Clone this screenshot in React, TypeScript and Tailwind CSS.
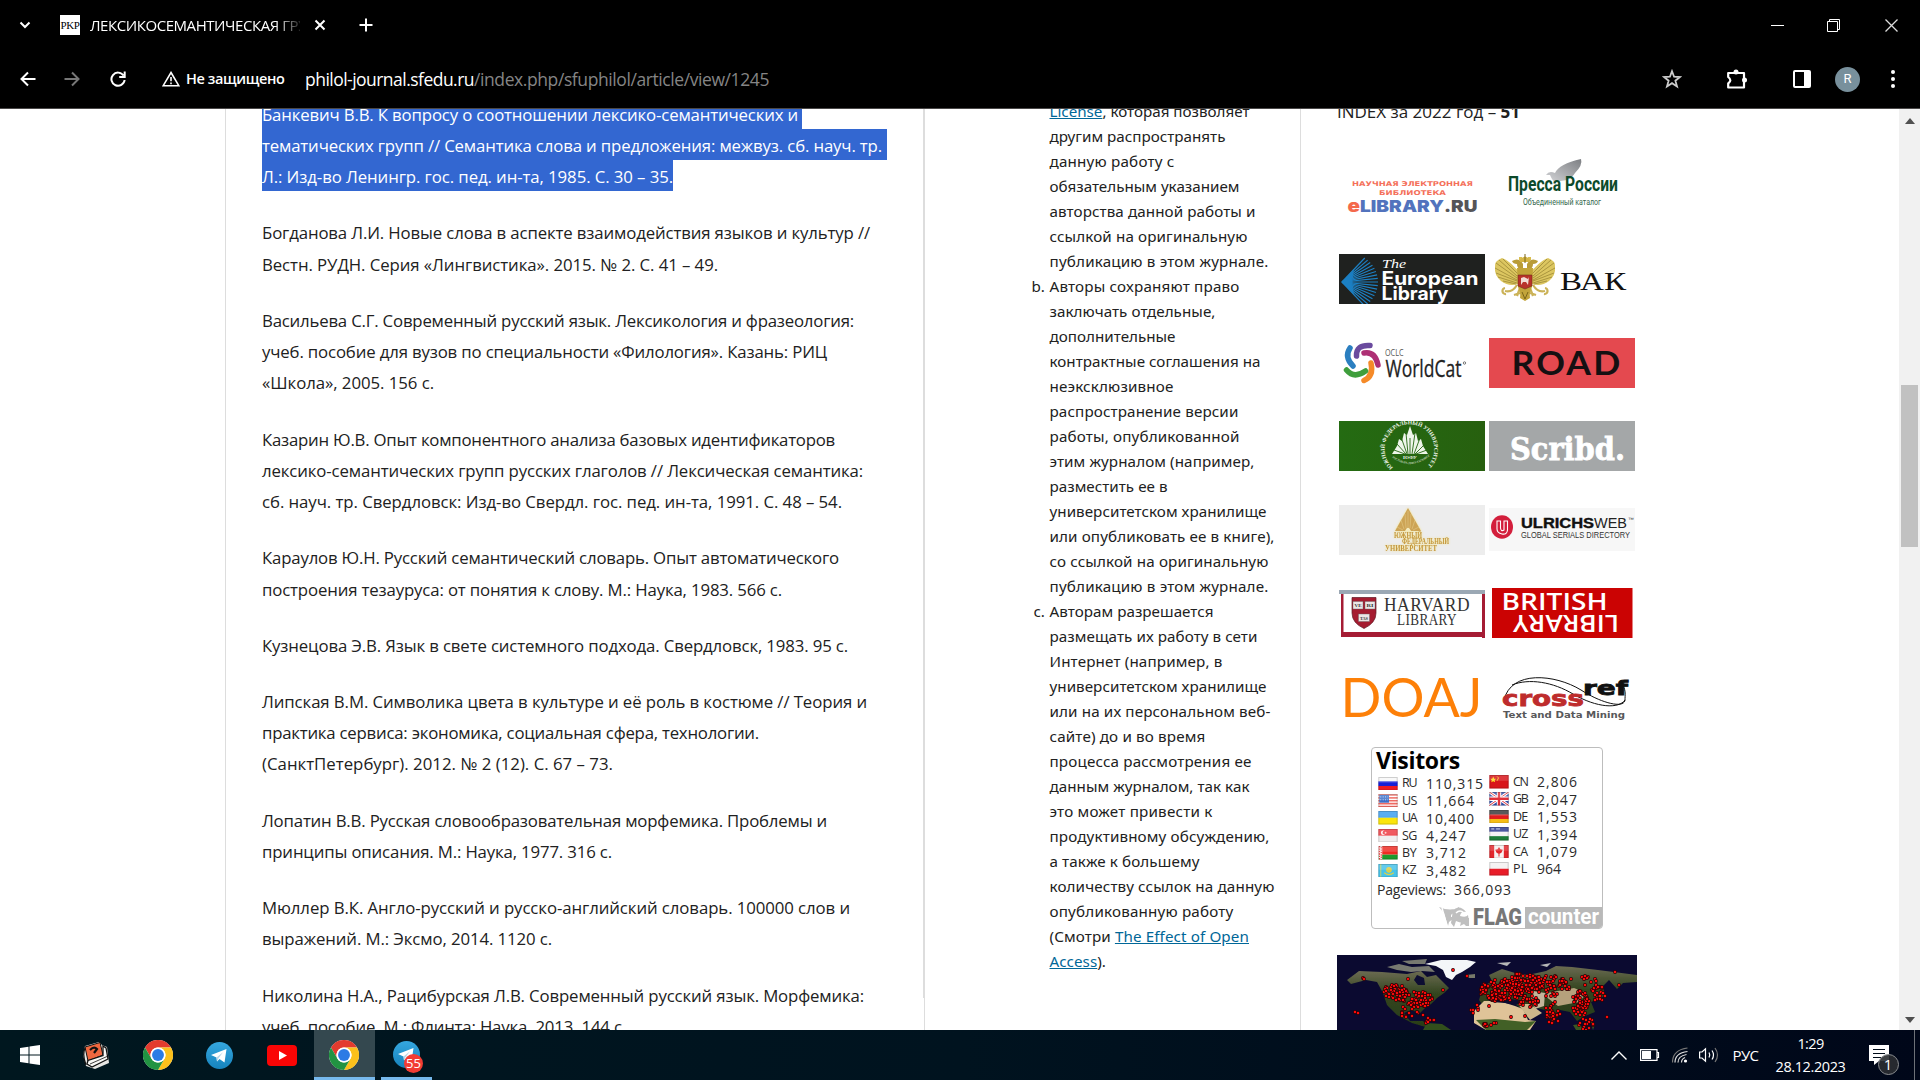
import { useLayoutEffect, useRef, type ReactNode } from "react";

/* Text run whose tracking is adjusted so that it spans exactly w pixels. */
function Fit({ w, children, className = "" }: { w: number; children: ReactNode; className?: string }) {
  const ref = useRef<HTMLSpanElement>(null);
  useLayoutEffect(() => {
    const el = ref.current;
    if (!el) return;
    el.style.letterSpacing = "0px";
    const natural = el.getBoundingClientRect().width;
    const n = (el.textContent || "").length;
    el.style.letterSpacing = `${(w - natural) / n}px`;
  }, [w, children]);
  return (
    <span ref={ref} className={`inline-block whitespace-nowrap ${className}`}>
      {children}
    </span>
  );
}

type Line = [string, number];

const references: Line[][] = [
  [["Богданова Л.И. Новые слова в аспекте взаимодействия языков и культур //", 608], ["Вестн. РУДН. Серия «Лингвистика». 2015. № 2. С. 41 – 49.", 456]],
  [["Васильева С.Г. Современный русский язык. Лексикология и фразеология:", 592], ["учеб. пособие для вузов по специальности «Филология». Казань: РИЦ", 565], ["«Школа», 2005. 156 с.", 172]],
  [["Казарин Ю.В. Опыт компонентного анализа базовых идентификаторов", 573], ["лексико-семантических групп русских глаголов // Лексическая семантика:", 601], ["сб. науч. тр. Свердловск: Изд-во Свердл. гос. пед. ин-та, 1991. С. 48 – 54.", 580]],
  [["Караулов Ю.Н. Русский семантический словарь. Опыт автоматического", 577], ["построения тезауруса: от понятия к слову. М.: Наука, 1983. 566 с.", 520]],
  [["Кузнецова Э.В. Язык в свете системного подхода. Свердловск, 1983. 95 с.", 586]],
  [["Липская В.М. Символика цвета в культуре и её роль в костюме // Теория и", 605], ["практика сервиса: экономика, социальная сфера, технологии.", 497], ["(СанктПетербург). 2012. № 2 (12). С. 67 – 73.", 351]],
  [["Лопатин В.В. Русская словообразовательная морфемика. Проблемы и", 565], ["принципы описания. М.: Наука, 1977. 316 с.", 350]],
  [["Мюллер В.К. Англо-русский и русско-английский словарь. 100000 слов и", 588], ["выражений. М.: Эксмо, 2014. 1120 с.", 290]],
  [["Николина Н.А., Рацибурская Л.В. Современный русский язык. Морфемика:", 602], ["учеб. пособие. М.: Флинта: Наука, 2013. 144 с.", 364]],
];

const selected: [string, number, number][] = [
  ["Банкевич В.В. К вопросу о соотношении лексико-семантических и", 536, 540],
  ["тематических групп // Семантика слова и предложения: межвуз. сб. науч. тр.", 620, 625],
  ["Л.: Изд-во Ленингр. гос. пед. ин-та, 1985. С. 30 – 35.", 411, 411],
];

const rightsB: Line[] = [
  ["Авторы сохраняют право", 190], ["заключать отдельные,", 166], ["дополнительные", 126], ["контрактные соглашения на", 211],
  ["неэксклюзивное", 124], ["распространение версии", 189], ["работы, опубликованной", 190], ["этим журналом (например,", 205],
  ["разместить ее в", 118], ["университетском хранилище", 217], ["или опубликовать ее в книге),", 225], ["со ссылкой на оригинальную", 219], ["публикацию в этом журнале.", 219],
];
const rightsC: Line[] = [
  ["Авторам разрешается", 164], ["размещать их работу в сети", 208], ["Интернет (например, в", 173], ["университетском хранилище", 217],
  ["или на их персональном веб-", 221], ["сайте) до и во время", 156], ["процесса рассмотрения ее", 202], ["данным журналом, так как", 200],
  ["это может привести к", 163], ["продуктивному обсуждению,", 220], ["а также к большему", 150], ["количеству ссылок на данную", 225], ["опубликованную работу", 184],
];
const rightsA: Line[] = [
  ["другим распространять", 176], ["данную работу с", 125], ["обязательным указанием", 190], ["авторства данной работы и", 206], ["ссылкой на оригинальную", 198], ["публикацию в этом журнале.", 219],
];

function Lines({ lines }: { lines: Line[] }) {
  return (
    <>
      {lines.map(([t, w], i) => (
        <div key={i} className="h-[25px]"><Fit w={w}>{t}</Fit></div>
      ))}
    </>
  );
}

/* Text stretched to a given length inside a logo drawing. */
function T({ x, y, w, s, f, c, b, i, ls, children }: { x: number; y: number; w: number; s: number; f: string; c: string; b?: number; i?: boolean; ls?: number; children: string }) {
  return (
    <text x={x} y={y} textLength={w} lengthAdjust="spacingAndGlyphs" fontSize={s} fontFamily={f} fill={c} fontWeight={b ?? 400} fontStyle={i ? "italic" : "normal"} letterSpacing={ls}>
      {children}
    </text>
  );
}

const logo = "block h-[50px] w-[146px] shrink-0 overflow-visible";
const clippedLogo = "block h-[50px] w-[146px] shrink-0 overflow-hidden";

function ELibrary() {
  return (
    <svg viewBox="0 0 146 50" className={logo}>
      <T x={13} y={15} w={121} s={6.6} f="DejaVu Sans" b={700} c="#f4705a">НАУЧНАЯ ЭЛЕКТРОННАЯ</T>
      <T x={40} y={24} w={67} s={6.6} f="DejaVu Sans" b={700} c="#f4705a">БИБЛИОТЕКА</T>
      <T x={8.5} y={41} w={12.5} s={17.5} f="Inter" b={900} c="#f4694c">e</T>
      <T x={21} y={41} w={84} s={16.5} f="Inter" b={900} c="#5273bd">LIBRARY</T>
      <T x={105} y={41} w={33.5} s={16.5} f="Inter" b={900} c="#555558">.RU</T>
    </svg>
  );
}
function Pressa() {
  return (
    <svg viewBox="0 0 146 50" className={logo}>
      <defs><linearGradient id="dove" x1="1" y1="0" x2="0" y2="1"><stop offset="0" stopColor="#7d7f83" /><stop offset="1" stopColor="#d4d5d8" /></linearGradient></defs>
      <path d="M57 4 Q60 -1 66 2 Q70 -7 92 -12 Q94 -6 86 2 Q83 7 78 9 L65 11 Q62 7 61 4Z" fill="url(#dove)" />
      <T x={19} y={20} w={110} s={20.5} f="Roboto" b={700} c="#0c4a2b">Пресса России</T>
      <T x={34} y={33.500} w={78} s={9.5} f="Roboto" c="#35684c">Объединенный каталог</T>
    </svg>
  );
}
function European() {
  return (
    <svg viewBox="0 0 146 50" className={clippedLogo}>
      <rect width="146" height="50" fill="#1f211f" />
      <path d="M3 28 L15 15 Q12 28 15 41Z" fill="#1673b5" />
      <g stroke="#1d80c4" strokeWidth="1.2">
        {Array.from({ length: 17 }, (_, k) => {
          const a = (-48 + k * 6) * (Math.PI / 180);
          const r = 30 + 6 * Math.cos(a);
          return <path key={k} d={`M3 28 L${3 + r * Math.cos(a)} ${28 + r * Math.sin(a) * 0.95}`} />;
        })}
      </g>
      <T x={43} y={14} w={24} s={12.5} f="Liberation Serif" i c="#fff">The</T>
      <T x={42.5} y={30.500} w={97} s={18.5} f="Inter" b={700} c="#fff">European</T>
      <T x={42.5} y={46} w={67} s={18.5} f="Inter" b={700} c="#fff">Library</T>
    </svg>
  );
}
function Vak() {
  const wing = (
    <g>
      <path d="M-5 17 C-11 12 -15 6 -23 3 Q-31 6 -30 12 Q-31 20 -24 26 Q-16 32 -7 29Z" fill="#dcc660" />
      <path d="M-7 19 L-22 4 M-8 21 L-26 5 M-8 23 L-29 8 M-8 25 L-30 13 M-8 26 L-29 18 M-8 28 L-27 22 M-9 29 L-22 26" stroke="#94802f" strokeWidth=".7" />
      <path d="M-2 14 Q-8 15 -8 9 Q-12 9 -13 6 Q-8 3 -4 6 L-2 9Z" fill="#b99c38" />
      <path d="M-6 5 V2 H-3 V5Z" fill="#d9bd4e" />
      <path d="M-8 30 Q-13 38 -20 36 M-20 33 A3 3 0 1 0 -19 39 M-5 33 L-8 41 M-11 40 L-5 38" stroke="#cbb257" strokeWidth="2.2" fill="none" />
    </g>
  );
  return (
    <svg viewBox="0 0 146 50" className={logo}>
      <g transform="translate(36 1)">
        {wing}
        <g transform="scale(-1 1)">{wing}</g>
        <path d="M-8 13 H8 L7 32 Q4 36 5 43 L0 46 L-5 43 Q-4 36 -7 32Z" fill="#c2a43a" />
        <path d="M-5 5 Q0 -2 5 5 V7 H-5Z" fill="#d4b545" />
        <path d="M0 -1 V8" stroke="#7b6518" />
        <path d="M-7 20 H7 V31 L0 34 L-7 31Z" fill="#b8322b" stroke="#74301a" strokeWidth=".6" />
        <path d="M-4 23 L-1 22 L3 24 L4 22 L3 30 L1 27 L-2 27 L-4 30Z" fill="#f2dcd6" />
        <path d="M-3 37 L0 44 L3 37" stroke="#7b6518" fill="none" />
      </g>
      <T x={71} y={36} w={66} s={26} f="Liberation Serif" c="#111">ВАК</T>
    </svg>
  );
}
function WorldCat() {
  return (
    <svg viewBox="0 0 146 50" className={logo}>
      <g fill="none" strokeWidth="5.5" strokeLinecap="round">
        <path d="M11 10 Q5 19 14 28" stroke="#2b7fc0" />
        <path d="M17.500 18 Q17 6.500 31 7.500" stroke="#6a4a9e" />
        <path d="M25 15 Q36 13 39 27" stroke="#ae2f74" />
        <path d="M32 25 Q35 38 25 42.500" stroke="#f58a28" />
        <path d="M7.500 32 Q15 41 26.500 33" stroke="#3f9e3c" />
      </g>
      <T x={46} y={18} w={18.5} s={9.5} f="Open Sans" c="#555">OCLC</T>
      <g stroke="#222" strokeWidth=".3"><T x={46.5} y={38.5} w={76} s={23.5} f="Open Sans" c="#222">WorldCat</T></g>
      <circle cx="125.5" cy="25" r="1.2" fill="none" stroke="#444" strokeWidth=".7" />
    </svg>
  );
}
function Road() {
  return (
    <svg viewBox="0 0 146 50" className={logo}>
      <rect width="146" height="50" fill="#e4494f" />
      <T x={22.500} y={37} w={111} s={32} f="Lato" b={700} c="#151012" ls={2}>ROAD</T>
    </svg>
  );
}
function SfeduGreen() {
  return (
    <svg viewBox="0 0 146 50" className={clippedLogo}>
      <defs>
        <linearGradient id="gr"><stop offset="0" stopColor="#246b12" /><stop offset="1" stopColor="#27600f" /></linearGradient>
        <path id="ring" d="M54 46.5 A24.800 24.800 0 1 1 87 46.5" />
        <path id="ringIn" d="M50 34 Q71 52 92 34" />
      </defs>
      <rect width="146" height="50" fill="url(#gr)" />
      <g fill="#eef5ea">
        <text fontSize="5.600" fontFamily="Liberation Serif" fontWeight="700"><textPath href="#ring">ЮЖНЫЙ ФЕДЕРАЛЬНЫЙ УНИВЕРСИТЕТ</textPath></text>
        <path d="M71 5 L74 14 L77 12 L79 20 L82 18 L84 25 L89 33 H53 L58 25 L60 18 L63 20 L65 12 L68 14Z" />
        <g stroke="#246512" strokeWidth=".9">
          <path d="M71 33 V17 M69 33 L67 12 M73 33 L76 12 M68 33 L62 16 M75 33 L81 17 M67 33 L58 23 M76 33 L85 24 M66 33 L55 29 M77 33 L88 29" />
        </g>
        <T x={64} y={38} w={14} s={4.600} f="Liberation Serif" b={700} c="#eef5ea">ЮФУ</T>
        <text fontSize="2.900" fontFamily="Liberation Serif"><textPath href="#ringIn" startOffset="4">РОСТОВ-НА-ДОНУ-ТАГАНРОГ</textPath></text>
      </g>
    </svg>
  );
}
function Scribd() {
  return (
    <svg viewBox="0 0 146 50" className={logo}>
      <rect width="146" height="50" fill="#a4a7a8" />
      <g stroke="#fff" strokeWidth=".8"><T x={21} y={39} w={115} s={31} f="DejaVu Serif" b={700} c="#fff">Scribd.</T></g>
    </svg>
  );
}
function SfeduGold() {
  return (
    <svg viewBox="0 0 146 50" className={logo}>
      <rect width="146" height="50" fill="#ededed" />
      <g style={{ filter: "drop-shadow(0 0 1px #f5e58a)" }}>
        <path d="M69 3 L82 26 H56Z" fill="#cda455" />
        <path d="M69 22 V6 M67 23 L66 9 M71 23 L72 9 M65 24 L62 15 M73 24 L76 15 M64 25 L58 22 M74 25 L80 22" stroke="#eddca0" strokeWidth=".4" />
        <path d="M66 26 Q69 19 72 26Z" fill="#f5ecc0" />
        <T x={55} y={33} w={28} s={7.5} f="Liberation Serif" b={700} c="#c4973e">ЮЖНЫЙ</T>
        <T x={63} y={39} w={47} s={7.5} f="Liberation Serif" b={700} c="#c4973e">ФЕДЕРАЛЬНЫЙ</T>
        <T x={46} y={46} w={52} s={7.5} f="Liberation Serif" b={700} c="#c4973e">УНИВЕРСИТЕТ</T>
      </g>
    </svg>
  );
}
function Ulrichs() {
  return (
    <svg viewBox="0 0 146 50" className={logo}>
      <rect y="3" width="146" height="43" fill="#f7f7f7" />
      <ellipse cx="13" cy="22" rx="11" ry="11.8" fill="#d31f3c" />
      <path d="M8 16 H11.5 V23 Q12 27 15 25 V16 H18.5 V25 Q18 30 13 29 Q8 28 8 24Z" fill="none" stroke="#fff" strokeWidth="1.1" />
      <g stroke="#111" strokeWidth=".4"><T x={32} y={23} w={73} s={14.8} f="Liberation Sans" b={700} c="#111">ULRICHS</T></g>
      <T x={105} y={23} w={33} s={14.8} f="Liberation Sans" c="#222">WEB</T>
      <T x={139} y={16} w={6} s={5} f="Liberation Sans" c="#333">™</T>
      <T x={32} y={33} w={109} s={8.5} f="Liberation Sans" c="#333">GLOBAL SERIALS DIRECTORY</T>
    </svg>
  );
}
function Harvard() {
  return (
    <svg viewBox="0 0 146 50" className={logo}>
      <path d="M2 6 V49 H143 V50 H146 V6Z" fill="#a51c34" />
      <path d="M4.500 6 H143 V44 H4.500Z" fill="#fff" />
      <rect y="2" width="146" height="4" fill="#9ba8b4" />
      <path d="M13 9.500 H37 V25 Q37 35 25 40.500 Q13 35 13 25Z" fill="#a51c30" stroke="#5b1722" strokeWidth=".7" />
      <g fill="#ece6e6" stroke="#666" strokeWidth=".4">
        <rect x="14" y="13.500" width="10" height="7.500" /><rect x="26" y="13.500" width="10" height="7.500" /><rect x="19.500" y="26" width="11" height="7.500" />
      </g>
      <T x={15.500} y={19} w={7} s={5} f="Liberation Serif" b={700} c="#333">VE</T>
      <T x={27.500} y={19} w={7} s={5} f="Liberation Serif" b={700} c="#333">RI</T>
      <T x={21} y={31.500} w={8} s={5} f="Liberation Serif" b={700} c="#333">TAS</T>
      <T x={45} y={22.500} w={86} s={18} f="Liberation Serif" c="#333" ls={0.5}>HARVARD</T>
      <T x={58} y={37} w={60} s={16} f="Liberation Serif" c="#333" ls={0.5}>LIBRARY</T>
    </svg>
  );
}
function British() {
  return (
    <svg viewBox="0 0 146 50" className={logo}>
      <rect x="3" width="140.500" height="50" fill="#cb0303" />
      <T x={12.500} y={22} w={106} s={24} f="Open Sans" b={600} c="#fff">BRITISH</T>
      <g transform="rotate(180 79 35)"><T x={28} y={43} w={106} s={24} f="Open Sans" b={600} c="#fff">LIBRARY</T></g>
    </svg>
  );
}
function Doaj() {
  return (
    <svg viewBox="0 0 146 50" className={logo}>
      <T x={1.500} y={45} w={142} s={54} f="Lato" c="#fd8008">DOAJ</T>
    </svg>
  );
}
function Crossref() {
  return (
    <svg viewBox="0 0 146 50" className={logo}>
      <path d="M15 28 C22 -2 66 2 92 18 C112 31 135 37 136 28 C136 24 137 18 134 14 M23 13 C40 6 64 10 84 22 C108 36 130 37 136 28" fill="none" stroke="#111" strokeWidth="1" />
      <g stroke="#be2c2c" strokeWidth=".8"><T x={13} y={34} w={82} s={21.500} f="DejaVu Sans" b={700} c="#be2c2c">cross</T></g>
      <g stroke="#111" strokeWidth=".8"><T x={94} y={22.500} w={45} s={19.500} f="DejaVu Sans" b={700} c="#111">ref</T></g>
      <T x={14} y={45.500} w={122} s={9.500} f="DejaVu Sans" b={700} c="#58585a">Text and Data Mining</T>
    </svg>
  );
}

const flagArt: Record<string, ReactNode> = {
  RU: <><rect width="20" height="14" fill="#f8f8f8" /><rect y="4.500" width="20" height="5" fill="#1620d8" /><rect y="9.300" width="20" height="4.700" fill="#ee1c22" /></>,
  US: <><rect width="20" height="14" fill="#fff" /><path d="M0 1H20M0 4H20M0 7H20M0 10H20M0 13H20" stroke="#ef6a62" strokeWidth="1.600" /><rect x="1" y="1" width="10" height="8" fill="#3c6fc8" /><path d="M2 3H10M2 6H10" stroke="#cfe0ff" strokeDasharray="1 1.500" /></>,
  UA: <><rect width="20" height="7" fill="#3b9ff0" /><rect y="7" width="20" height="7" fill="#fbe50c" /></>,
  SG: <><rect width="20" height="7" fill="#ee3b42" /><rect y="7" width="20" height="7" fill="#f1eeee" /><circle cx="5" cy="3.800" r="2.300" fill="#fff" /><circle cx="6.200" cy="3.800" r="1.900" fill="#ee3b42" /><circle cx="7.500" cy="3.800" r="1" fill="#fcc" /></>,
  BY: <><rect width="20" height="9" fill="#ee2a22" /><rect y="9" width="20" height="5" fill="#1c9a2c" /><rect width="4" height="14" fill="#fff" /><path d="M1.200 0V14M3 1V14" stroke="#ee3a3a" strokeWidth="1.200" strokeDasharray="1.500 1" /></>,
  KZ: <><rect width="20" height="14" fill="#45c3ea" /><path d="M2.500 0V14" stroke="#cbd56a" /><circle cx="11" cy="6" r="3" fill="#d9d04a" /><path d="M6 9Q11 13 16 9" stroke="#d9d04a" fill="none" strokeWidth="1.300" /></>,
  CN: <><rect width="20" height="14" fill="#d8141a" /><path d="M4 1.500 L5 4 L7 4 L5.500 5.500 L6 7.500 L4 6.500 L2 7.500 L2.500 5.500 L1 4 L3 4Z" fill="#fcdc1c" /><path d="M8 1.500 L9.500 3 L8 6" stroke="#fcc81c" fill="none" /></>,
  GB: <><rect width="20" height="14" fill="#3450a8" /><path d="M0 0L20 14M20 0L0 14" stroke="#fff" strokeWidth="3" /><path d="M0 0L20 14M20 0L0 14" stroke="#e0303a" strokeWidth="1" /><path d="M10 0V14M0 7H20" stroke="#fff" strokeWidth="4.500" /><path d="M10 0V14M0 7H20" stroke="#e0303a" strokeWidth="2.500" /></>,
  DE: <><rect width="20" height="5" fill="#3a3a3a" /><rect y="4.700" width="20" height="4.700" fill="#e21d1d" /><rect y="9.300" width="20" height="4.700" fill="#f6bd16" /></>,
  UZ: <><rect width="20" height="5" fill="#2b3890" /><rect y="5" width="20" height="4.500" fill="#f5f2f4" /><rect y="9.500" width="20" height="4.500" fill="#1f7d3a" /><path d="M2 2H5M7 2H11" stroke="#cdd3f3" /></>,
  CA: <><rect width="20" height="14" fill="#f7f0f0" /><rect width="5" height="14" fill="#e2262c" /><rect x="15" width="5" height="14" fill="#e2262c" /><path d="M10 2L11.500 4.500L14 5L12.500 8L10.500 9V12H9.500V9L7.500 8L6 5L8.500 4.500Z" fill="#e2262c" /></>,
  PL: <><rect width="20" height="7" fill="#f4f1f1" /><rect y="7" width="20" height="7" fill="#e81c28" /></>,
};

const visitors: [string, string][][] = [
  [["RU", "110,315"], ["US", "11,664"], ["UA", "10,400"], ["SG", "4,247"], ["BY", "3,712"], ["KZ", "3,482"]],
  [["CN", "2,806"], ["GB", "2,047"], ["DE", "1,553"], ["UZ", "1,394"], ["CA", "1,079"], ["PL", "964"]],
];
const numberWidth: Record<string, number> = { "110,315": 58, "11,664": 49, "10,400": 49, "964": 24 };

function VisitorColumn({ rows }: { rows: [string, string][] }) {
  return (
    <div className="flex w-[111px] flex-col">
      {rows.map(([c, n]) => (
        <div key={c} className="flex h-[17.400px] items-center">
          <svg viewBox="0 0 20 14" className="h-[13.500px] w-5 shrink-0">
            {flagArt[c]}
            <rect width="20" height="6" fill="#fff" opacity=".16" />
            <rect x=".5" y=".5" width="19" height="13" fill="none" stroke="#000" opacity=".18" />
          </svg>
          <span className="ml-1 w-6 pt-px text-[12.500px]"><Fit w={14.5}>{c}</Fit></span>
          <span className="text-[14px]"><Fit w={numberWidth[n] ?? 41}>{n}</Fit></span>
        </div>
      ))}
    </div>
  );
}

function FlagCounter() {
  return (
    <div className="mt-[25px] ml-[34px] flex h-[182px] w-[232px] flex-col overflow-hidden rounded-[4px] border border-[#bdbdbd] bg-white font-['Open_Sans',sans-serif] text-[#2b2b2b]">
      <div className="h-[27.500px] pl-1 text-[23px] leading-[24px] font-bold text-black"><Fit w={84}>Visitors</Fit></div>
      <div className="flex pl-1.5">
        <div className="pt-[.5px]"><VisitorColumn rows={visitors[0]} /></div>
        <div className="-mt-px"><VisitorColumn rows={visitors[1]} /></div>
      </div>
      <div className="h-[20px] pt-[1.500px] pl-[5px] text-[14px] leading-[18px]"><Fit w={69}>Pageviews:</Fit><span className="ml-2"><Fit w={58}>366,093</Fit></span></div>
      <svg viewBox="0 0 230 24" className="mt-[5px] block h-6 w-[230px] shrink-0">
        <path d="M67 3 Q79 8 87 3 L85 8 Q78 9 79 13 H83 L77 18 L76 22 L72 9Z M81 6 Q88 0 94 8 Q89 7 88 12 Q94 14 96 11 L97 18 Q89 20 84 17 L82 23 L79 19Z M90 14 H97 V22 H94 L92 20 L88 22Z" fill="#bfbfbf" />
        <path d="M70 4 L75 22 M84 9 Q88 5 92 9" stroke="#fff" fill="none" strokeWidth="1.500" />
        <rect x="153" y="3" width="77" height="21" fill="#b9b9b9" />
        <T x={101} y={20.500} w={49} s={23} f="Roboto" b={900} c="#777">FLAG</T>
        <T x={156} y={20} w={71} s={22} f="Roboto" b={700} c="#fff">counter</T>
      </svg>
    </div>
  );
}

/* Visitor dots: [centre x, centre y, spread x, spread y, count]. */
const clusters: [number, number, number, number, number][] = [
  [58, 38, 13, 8, 50], [80, 44, 15, 8, 55], [72, 57, 10, 6, 14], [88, 66, 10, 7, 10], [165, 35, 22, 12, 150], [187, 28, 20, 10, 110],
  [215, 31, 18, 11, 50], [192, 46, 10, 7, 28], [216, 58, 8, 11, 32], [243, 48, 9, 13, 60], [262, 38, 8, 9, 26], [249, 68, 8, 7, 16], [240, 25, 34, 6, 20], [139, 53, 5, 6, 6], [152, 69, 8, 3, 9],
];
const dots = (() => {
  let seed = 41;
  const rnd = () => ((seed = (seed * 16807) % 2147483647) / 2147483647);
  const out: [number, number][] = [[26, 23], [27, 24], [18, 57], [21, 58], [116, 15], [130, 21], [270, 62], [278, 17], [282, 30], [152, 51], [174, 62], [188, 61], [71, 24], [106, 35]];
  for (const [cx, cy, sx, sy, n] of clusters)
    for (let k = 0; k < n; k++) {
      const a = rnd() * Math.PI * 2;
      const r = Math.sqrt(rnd());
      out.push([Math.round(cx + Math.cos(a) * r * sx), Math.round(cy + Math.sin(a) * r * sy)]);
    }
  return out;
})();

function WorldMap() {
  return (
    <svg viewBox="0 0 300 75" className="mt-[26px] block h-[75px] w-[300px] shrink-0">
      <defs>
        <filter id="soft"><feGaussianBlur stdDeviation=".7" /></filter>
        <linearGradient id="forest" x2="0" y2="1"><stop offset="0" stopColor="#6c6b52" /><stop offset=".4" stopColor="#33451f" /><stop offset="1" stopColor="#283d18" /></linearGradient>
      </defs>
      <rect width="300" height="75" fill="#0b0a30" />
      <g filter="url(#soft)">
        <path d="M10 25 L22 16 L45 17 L70 19 L84 16 L90 22 L99 20 L112 33 L107 38 L100 43 L94 49 L88 53 L83 58 L74 55 L67 58 L73 66 L86 66 L92 73 L75 68 L60 60 L50 50 L46 38 L40 27 L29 25 L14 29Z" fill="url(#forest)" />
        <path d="M80 20 L87 23 L88 30 L81 30 L77 25Z" fill="#0b0a30" />
        <path d="M90 68 L105 69 L114 75 H86Z" fill="#33501e" />
        <path d="M50 12 L62 9 L75 12 L92 11 L98 17 L85 16 L74 17 L60 15Z M65 6 L90 4 L88 9 L72 9Z" fill="#77796f" />
        <path d="M88 9 L104 5 L130 5 L139 7 L133 12 L125 17 L119 20 L115 25 L109 22 L106 15 L99 11Z" fill="#f4f6f8" />
        <path d="M129 20 L138 19 L138 23 L132 23Z" fill="#77796a" />
        <path d="M142 45 L146 32 L155 26 L152 20 L165 14 L178 18 L191 20 L209 16 L219 11 L235 12 L261 15 L300 20 V27 L286 28 L280 34 L272 25 L266 31 L268 41 L254 47 L258 57 L248 61 L240 66 L233 57 L223 55 L216 69 L208 55 L195 52 L199 58 L190 63 L181 51 L170 46 L157 43 L145 49Z" fill="url(#forest)" />
        <path d="M205 39 L237 33 L250 38 L242 47 L221 51 L212 44Z" fill="#b6a17b" />
        <path d="M196 36 L208 38 L207 51 L198 54 L194 43Z" fill="#c2b59a" />
        <path d="M137 56 L147 46 L162 46 L178 51 L186 54 L191 65 L199 66 L193 75 H149 L137 68Z" fill="#dfc398" />
        <path d="M139 65 L158 64 L188 67 L199 66 L190 75 H149Z" fill="#426025" />
        <path d="M181 49 L193 49 L205 58 L193 65Z" fill="#cdb68b" />
        <path d="M160 8 L174 7 L170 11Z M203 10 L214 8 L210 12Z" fill="#b7b8b7" />
        <path d="M236 70 L243 69 L246 75 H239Z M253 65 L258 69 L256 75Z" fill="#3b5722" />
      </g>
      <path d="M149 43 L155 47 L168 48 L179 50 L186 46 L174 44 L165 45 L157 41Z M178 38 L190 39 L187 42 L179 42Z" fill="#0b0a30" />
      {dots.map(([x, y], i) => (
        <g key={i}><circle cx={x} cy={y} r="1.900" fill="#230205" /><circle cx={x} cy={y} r="1.250" fill="#fa0a0a" /></g>
      ))}
    </svg>
  );
}

function Chrome() {
  return (
    <svg viewBox="0 0 48 48" className="size-[30px]">
      <circle cx="24" cy="24" r="24" fill="#fff" />
      <path d="M3.200 12 A24 24 0 0 1 44.800 12 H24 A12 12 0 0 0 13.600 30Z" fill="#e33b2e" />
      <path d="M44.800 12 A24 24 0 0 1 24 48 L34.400 30 A12 12 0 0 0 24 12Z" fill="#fcc01b" />
      <path d="M24 48 A24 24 0 0 1 3.200 12 L13.600 30 A12 12 0 0 0 34.400 30Z" fill="#229342" />
      <circle cx="24" cy="24" r="12" fill="#fff" /><circle cx="24" cy="24" r="9.500" fill="#2c7be5" />
    </svg>
  );
}
function Telegram() {
  return (
    <svg viewBox="0 0 27 27" className="size-[27px]">
      <defs><linearGradient id="tg" x2="0" y2="1"><stop offset="0" stopColor="#35a7df" /><stop offset="1" stopColor="#1683bd" /></linearGradient></defs>
      <circle cx="13.500" cy="13.500" r="13.500" fill="url(#tg)" />
      <path d="M5 13 L20.500 7 L18.500 20.500 L13.500 17 L11 19.500 L10.500 15.500Z" fill="#fff" />
      <path d="M10.500 15.500 L17 10.200 L12.500 16.200 L11 19.500Z" fill="#b9d5e7" />
    </svg>
  );
}

const strokeIcon = { fill: "none", stroke: "#fff", strokeWidth: 2 } as const;

function Browser() {
  return (
    <header className="flex h-[109px] shrink-0 flex-col border-b border-[#4a4848] bg-black font-['Open_Sans',sans-serif] text-white">
      <div className="flex h-[50px] items-center">
        <svg viewBox="0 0 12 12" className="ml-[19px] size-3" {...strokeIcon}><path d="M1.500 3.500 L6 8 L10.500 3.500" /></svg>
        <div className="ml-[29px] flex h-5 w-5 items-center justify-center bg-white font-['Liberation_Serif',serif] text-[11px] text-black"><Fit w={19}>PKP</Fit></div>
        <div className="ml-[10px] w-[210px] overflow-hidden text-[15px] [mask-image:linear-gradient(to_right,#000_88%,transparent_102%)]"><Fit w={217}>ЛЕКСИКОСЕМАНТИЧЕСКАЯ ГРУ</Fit></div>
        <svg viewBox="0 0 12 12" className="ml-[14px] size-3" {...strokeIcon}><path d="M1.500 1.500 L10.500 10.500 M10.500 1.500 L1.500 10.500" /></svg>
        <svg viewBox="0 0 14 14" className="ml-[32.500px] size-3.5" {...strokeIcon}><path d="M7 0.500 V13.500 M0.500 7 H13.500" /></svg>
        <div className="ml-auto flex items-center gap-[43px] pr-[22px]">
          <svg viewBox="0 0 13 13" className="size-[13px]" fill="none" stroke="#fff"><path d="M0 6.500 H13" /></svg>
          <svg viewBox="0 0 13 13" className="size-[13px]" fill="none" stroke="#fff"><path d="M.5 2.500 H10.500 V12.500 H.5Z M2.500 2.500 V.5 H12.500 V10.500 H10.500" /></svg>
          <svg viewBox="0 0 13 13" className="ml-0.5 size-[13px]" fill="none" stroke="#ddd" strokeWidth="1.300"><path d="M.5 .5 L12.500 12.500 M12.500 .5 L.5 12.500" /></svg>
        </div>
      </div>
      <div className="flex h-[58px] items-center">
        <svg viewBox="0 0 16 16" className="ml-[20px] size-4" {...strokeIcon}><path d="M15.500 8 H1.500 M8 1.500 L1.500 8 L8 14.500" /></svg>
        <svg viewBox="0 0 16 16" className="ml-[28px] size-4" fill="none" stroke="#777" strokeWidth="2"><path d="M.5 8 H14.500 M8 1.500 L14.500 8 L8 14.500" /></svg>
        <svg viewBox="0 0 16 16" className="ml-[29.500px] size-4" {...strokeIcon}><path d="M13.500 4.500 A6.600 6.600 0 1 0 14.600 9 M14.700 0.500 V6 H9.200" /></svg>
        <svg viewBox="0 0 18 16" className="ml-[36.500px] h-4 w-[18px]" fill="none" stroke="#fff" strokeWidth="1.600"><path d="M9 1.500 L16.800 14.700 H1.200Z M9 6 V10.300 M9 11.500 V13.200" /></svg>
        <span className="ml-[6px] text-[14.500px] font-semibold"><Fit w={98.5}>Не защищено</Fit></span>
        <span className="ml-[20.500px] pt-px text-[17.500px]"><Fit w={169}>philol-journal.sfedu.ru</Fit></span>
        <span className="pt-px text-[17.500px] text-[#858585]"><Fit w={295}>/index.php/sfuphilol/article/view/1245</Fit></span>
        <div className="ml-auto flex items-center">
          <svg viewBox="0 0 20 20" className="size-5" fill="none" stroke="#ccc" strokeWidth="1.800"><path d="M10 2.200 L12.100 7.700 L18 8 L13.400 11.700 L15 17.500 L10 14.200 L5 17.500 L6.600 11.700 L2 8 L7.900 7.700Z" /></svg>
          <svg viewBox="0 0 21 21" className="ml-[43.500px] size-[21px]"><path d="M2.200 4 H18 V18.500 H2.200 V14.500 Q6.500 11.300 2.200 8Z" fill="none" stroke="#fff" strokeWidth="2.200" strokeLinejoin="round" /><circle cx="10" cy="3" r="2.500" fill="#fff" /><circle cx="18.500" cy="11" r="2.500" fill="#fff" /></svg>
          <svg viewBox="0 0 18 18" className="ml-[46.500px] size-[18px]"><rect x="1" y="1" width="16" height="16" rx="1" fill="none" stroke="#fff" strokeWidth="2" /><path d="M11 1 H17 V17 H11Z" fill="#fff" /></svg>
          <div className="ml-[24px] flex size-[25px] items-center justify-center rounded-full bg-[#78909c] font-[Roboto,sans-serif] text-[13px]">R</div>
          <svg viewBox="0 0 4 18" className="mr-[25.500px] ml-[30.500px] h-[18px] w-1" fill="#fff"><circle cx="2" cy="2" r="2" /><circle cx="2" cy="9" r="2" /><circle cx="2" cy="16" r="2" /></svg>
        </div>
      </div>
    </header>
  );
}

function Taskbar() {
  return (
    <footer className="flex h-[50px] shrink-0 items-center bg-linear-to-r from-[#00171f] via-[#00131f] to-[#000719] font-['Open_Sans',sans-serif] text-white">
      <svg viewBox="0 0 20 20" className="ml-5 size-5" fill="#fff"><path d="M0 3 L8.500 1.800 V9.500 H0Z M9.500 1.600 L20 0 V9.500 H9.500Z M0 10.500 H8.500 V18.200 L0 17Z M9.500 10.500 H20 V20 L9.500 18.400Z" /></svg>
      <svg viewBox="0 0 28 28" className="ml-[42px] size-7">
        <path d="M3 5 L17 1 L20 4 L25 6 L27 22 L13 28 L4 25 L1 14Z" fill="#e6e6e3" />
        <path d="M3 6 L18 1.500 L21 14 L6 20Z" fill="#f0683f" stroke="#111" strokeWidth="1" />
        <path d="M21 5 L24 7 L26 18 L10 26 L5 23 L6 19.500 L21 14.500Z" fill="#f8f8f5" stroke="#111" strokeWidth="1.300" />
        <path d="M8 23 L25 15.500" stroke="#111" strokeWidth=".8" />
        <path d="M8 9 Q12 5 15 8 L12 12" stroke="#111" strokeWidth="2.200" fill="none" />
        <path d="M3 7 Q0 14 4 24" stroke="#111" strokeWidth="1.300" fill="none" />
      </svg>
      <div className="ml-[33px]"><Chrome /></div>
      <div className="ml-[33px]"><Telegram /></div>
      <svg viewBox="0 0 30 21" className="ml-[34px] h-[21px] w-[30px]"><rect width="30" height="21" rx="4" fill="#fa0505" /><path d="M12 6 L20 10.500 L12 15Z" fill="#fff" /></svg>
      <div className="ml-[17px] flex h-[50px] w-[61px] items-center justify-center border-b-3 border-[#76b9ed] bg-[#34484f] pt-[3px] pr-px"><Chrome /></div>
      <div className="relative ml-[6px] flex h-[50px] w-[51px] items-center justify-center border-b-3 border-[#76b9ed] pt-[2px] pr-px">
        <Telegram />
        <span className="absolute top-[24px] left-[23px] flex size-[19px] items-center justify-center rounded-full bg-[#f23c34] text-[13px] leading-none">55</span>
      </div>
      <div className="ml-auto flex h-[50px] items-center">
        <svg viewBox="0 0 16 9" className="h-[9px] w-4" fill="none" stroke="#fff" strokeWidth="1.400"><path d="M.5 8.500 L8 1 L15.500 8.500" /></svg>
        <svg viewBox="0 0 20 12" className="ml-[13px] h-3 w-5"><path d="M.6 .6 H17 V11.400 H.6Z M17 3.500 H18.500 V8.500 H17" fill="none" stroke="#fff" strokeWidth="1.200" /><rect x="2" y="2" width="9" height="8" fill="#fff" /></svg>
        <svg viewBox="0 0 16 16" className="ml-[12px] size-4" fill="none" stroke="#ddd" strokeWidth="1.200"><path d="M9.500 15.500 Q9.500 12 13 10.500 M6 15.500 Q6 9 14.500 7.500 M3 15.500 Q3 6 15.500 4.500" /><path d="M.5 15.500 Q.5 3 15.500 1" stroke="#777" /><circle cx="13.500" cy="14" r="1.600" fill="#fff" stroke="none" /></svg>
        <svg viewBox="0 0 20 18" className="ml-[11px] h-[18px] w-5" fill="none" stroke="#fff" strokeWidth="1.200"><path d="M.6 6 H3 L6.500 2.800 V15.200 L3 12 H.6Z M10 6.500 Q11.500 9 10 11.500 M13 4.500 Q16 9 13 13.500" /><path d="M16 2 Q21 9 16 16" stroke="#777" /></svg>
        <span className="ml-[14px] text-[15px]"><Fit w={26}>РУС</Fit></span>
        <div className="ml-[17px] flex w-[70px] flex-col items-center text-[14.500px] leading-[23px]"><Fit w={26}>1:29</Fit><Fit w={70}>28.12.2023</Fit></div>
        <div className="relative mr-[25.500px] ml-[23px] h-[50px] w-5">
          <svg viewBox="0 0 20 21" className="mt-[15px] h-[21px] w-5"><path d="M0 0 H20 V16 H10 L5 20 V16 H0Z" fill="#fff" /><path d="M4 4.500 H16 M4 8.500 H16 M4 12.500 H12" stroke="#000b18" strokeWidth="1.200" /></svg>
          <span className="absolute top-[24px] left-[9px] flex size-[21px] items-center justify-center rounded-full border border-[#8a8d90] bg-[#2a2d32]/90 text-[15px] leading-none">1</span>
        </div>
        <div className="mr-[5px] h-[50px] w-px bg-[#6d7178]" />
      </div>
    </footer>
  );
}

export default function App() {
  return (
    <div className="flex h-[1080px] w-[1920px] flex-col overflow-hidden bg-white">
      <Browser />
      <main className="flex min-h-0 flex-1 overflow-hidden font-['Noto_Sans','Open_Sans',sans-serif] text-[#212121]">
        <article className="relative ml-[225px] w-[700px] shrink-0 border-x border-[#ddd] pl-9 font-['Open_Sans',sans-serif] text-[16.800px] leading-[31.240px]">
          <div className="absolute top-0 right-0 h-[889px] w-px bg-[#ddd]" />
          <div className="-mt-[11px] mb-[26.400px]">
            {selected.map(([t, w, box]) => (
              <div key={t} className="h-[31px] bg-[#3367d1] pt-[2px] leading-[29px] text-white" style={{ width: box }}><Fit w={w}>{t}</Fit></div>
            ))}
          </div>
          {references.map((p, i) => (
            <div key={i} className="mb-[25px]">
              {p.map(([t, w]) => <div key={t} className="h-[31.240px]"><Fit w={w}>{t}</Fit></div>)}
            </div>
          ))}
        </article>
        <aside className="w-[376px] shrink-0 border-r border-[#ddd] pl-[107.500px] text-[15.200px] leading-[25px]">
          <div className="-mt-[10px] grid grid-cols-[17px_1fr]">
            <span />
            <div>
              <div className="h-[25px]"><Fit w={200}><a className="text-[#006798] underline">License</a>, которая позволяет</Fit></div>
              <Lines lines={rightsA} />
            </div>
            <span className="-ml-px">b.</span>
            <div><Lines lines={rightsB} /></div>
            <span className="pl-px">c.</span>
            <div>
              <Lines lines={rightsC} />
              <div className="h-[25px]"><Fit w={199.5}>(Смотри <a className="text-[#006798] underline">The Effect of Open</a></Fit></div>
              <div className="h-[25px]"><Fit w={56.5}><a className="text-[#006798] underline">Access</a>).</Fit></div>
            </div>
          </div>
        </aside>
        <aside className="ml-9 w-[310px] shrink-0">
          <div className="-mt-[10px] h-[25px] font-['Open_Sans',sans-serif] text-[17px] leading-[25px]"><Fit w={183}>INDEX за 2022 год – <b>51</b></Fit></div>
          <div className="mt-[46.500px] grid grid-cols-[146px_146px] gap-x-1 gap-y-[33.500px] pl-0.5">
            <ELibrary /><Pressa />
            <European /><Vak />
            <WorldCat /><Road />
            <SfeduGreen /><Scribd />
            <SfeduGold /><Ulrichs />
            <Harvard /><British />
            <Doaj /><Crossref />
          </div>
          <FlagCounter />
          <WorldMap />
        </aside>
        <div className="ml-auto flex w-[21px] shrink-0 flex-col items-center bg-[#f1f1f1]">
          <svg viewBox="0 0 10 6" className="mt-[9px] h-[6px] w-[10px]" fill="#505050"><path d="M0 6 L5 0 L10 6Z" /></svg>
          <div className="mt-[261px] h-[162px] w-[17px] bg-[#c1c1c1]" />
          <svg viewBox="0 0 10 6" className="mt-auto mb-[7px] h-[6px] w-[10px]" fill="#505050"><path d="M0 0 L5 6 L10 0Z" /></svg>
        </div>
      </main>
      <Taskbar />
    </div>
  );
}
